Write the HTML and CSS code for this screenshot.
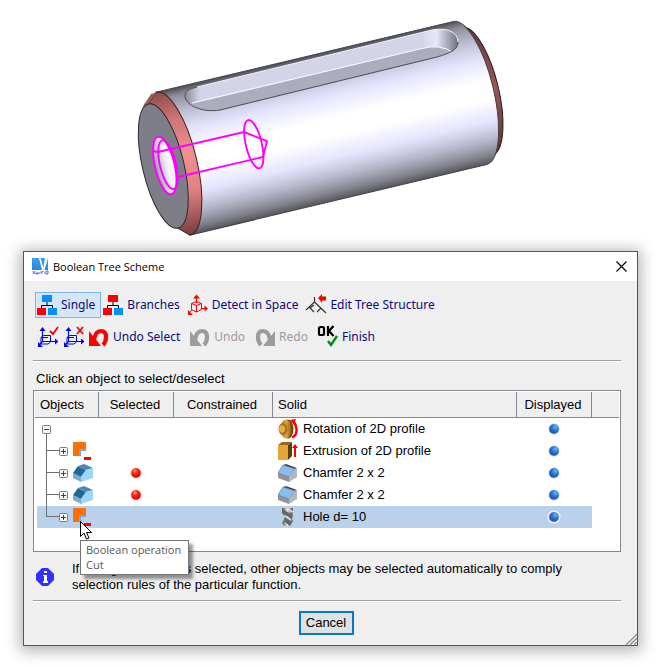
FILE: index.html
```html
<!DOCTYPE html>
<html lang="en">
<head>
<meta charset="utf-8">
<title>Boolean Tree Scheme</title>
<link rel="stylesheet" href="styles.css">
</head>
<body>
<svg class="defs" width="0" height="0" aria-hidden="true">
  <defs>
    <radialGradient id="redBall" cx=".4" cy=".3" r=".7"><stop offset="0" stop-color="#ffb0a0"/><stop offset=".35" stop-color="#ff2a1a"/><stop offset="1" stop-color="#d00000"/></radialGradient>
    <radialGradient id="blueBall" cx=".65" cy=".3" r=".8"><stop offset="0" stop-color="#5cc0ec"/><stop offset=".45" stop-color="#2c72d0"/><stop offset="1" stop-color="#1c44a8"/></radialGradient>
    <linearGradient id="logoBlue" x1="0" x2="0" y1="0" y2="1"><stop offset="0" stop-color="#3f9ff0"/><stop offset="1" stop-color="#2a86dc"/></linearGradient>
    <linearGradient id="gold" x1="0" x2="1"><stop offset="0" stop-color="#a87020"/><stop offset=".5" stop-color="#e8a838"/><stop offset="1" stop-color="#8a5a10"/></linearGradient>
    <linearGradient id="steel" x1="0" x2="1"><stop offset="0" stop-color="#555"/><stop offset=".5" stop-color="#e4e4e4"/><stop offset="1" stop-color="#555"/></linearGradient>
    <symbol id="i-plus" viewBox="0 0 9 9"><rect x=".5" y=".5" width="8" height="8" rx="1" fill="#f6f6f6" stroke="#7c7c7c"/><path d="M2 4.500h5M4.500 2v5" stroke="#2b3f8c"/></symbol>
    <symbol id="i-minus" viewBox="0 0 9 9"><rect x=".5" y=".5" width="8" height="8" rx="1" fill="#f6f6f6" stroke="#7c7c7c"/><path d="M2 4.500h5" stroke="#2b3f8c"/></symbol>
    <symbol id="i-cut" viewBox="0 0 20 20"><path d="M0 1h13v7H6v7H0z" fill="#ff7000"/><path d="M6 15V8h7v2H8v5z" fill="#66aaff"/><path d="M11 16h7v3h-7z" fill="#f00"/></symbol>
    <symbol id="i-body" viewBox="0 0 20 20"><path d="M0 10 8 14 8 19 0 15z" fill="#7aaed0"/><path d="M0 10 5 3 13 7 8 14z" fill="#1f6898"/><path d="M5 3 11 1 20 5 13 7z" fill="#4b88b4"/><path d="M8 14 13 7 20 5v10L8 19z" fill="#9cd6fa"/></symbol>
    <symbol id="i-red" viewBox="0 0 12 12"><circle cx="6" cy="6" r="5" fill="url(#redBall)" stroke="#ff9080" stroke-width=".6"/></symbol>
    <symbol id="i-blue" viewBox="0 0 14 14"><circle cx="7" cy="7" r="6.500" fill="#fff"/><circle cx="7" cy="7" r="5" fill="url(#blueBall)" stroke="#8aa4dc" stroke-width=".6"/></symbol>
    <symbol id="i-rot" viewBox="0 0 20 20"><ellipse cx="10" cy="10" rx="5.500" ry="9.500" fill="#6e480e"/><ellipse cx="8" cy="10" rx="5.500" ry="9.500" fill="url(#gold)"/><ellipse cx="5" cy="10" rx="4.500" ry="6" fill="#a87020"/><ellipse cx="4" cy="10" rx="3" ry="3.800" fill="#e8ac40"/><path d="M14 18.500q5-2 4.500-8.500-.5-5-3-7" fill="none" stroke="#f00" stroke-width="2.400"/><path d="M12 1 18 0 16 5.500z" fill="#f00"/></symbol>
    <symbol id="i-ext" viewBox="0 0 20 20"><path d="M0 4 4 1h10l-4 3z" fill="#96661a"/><path d="M0 4h10v15H0z" fill="#e6a634"/><path d="m10 4 4-3v14l-4 4z" fill="#5e3e0c"/><path d="M17 16V6" stroke="#f00" stroke-width="2"/><path d="m14 7 3-4 3 4z" fill="#f00"/></symbol>
    <symbol id="i-cham" viewBox="0 0 20 20"><path d="M0 10v5l11 4V14z" fill="#909498"/><path d="M5 2 8 1l11 4-2 1z" fill="#45484c"/><path d="m0 10 5-8 12 4-6 8z" fill="#86bef4" stroke="#666" stroke-width=".6"/><path d="m11 14 6-8 2-1v9l-8 5z" fill="#b4b6ba"/></symbol>
    <symbol id="i-drill" viewBox="0 0 20 20"><path d="M4 1h11v5l-2 4 2 4-3 5H6l-2-3 3-6-3-4z" fill="url(#steel)"/><path d="m4 2 11 6-1 4-10-6zM7 10l7 5-2 4-6-5z" fill="#666"/><path d="m8 1 7 4M7 9l6 4" stroke="#ddd" stroke-width="1.500"/></symbol>
    <symbol id="i-axes" viewBox="0 0 20 20"><g fill="none" stroke="#00f"><path d="M4.500 3v11.500H18M4.500 14.500 1 18" stroke-width="1.200"/><path d="M3 17v-6.500l2.500-2h7v6.500l-2.500 2zM3 10.500h7"/></g><path d="m1.500 4 3-4 3 4zM17 11.500l3.500 3-3.500 3zM0 15v5h5z" fill="#00f"/></symbol>
    <symbol id="i-undo" viewBox="0 0 20 20"><path d="M5 14Q6 4 12 4q5 0 5 6 0 5-3 8" fill="none" stroke="currentColor" stroke-width="4.200"/><path d="M0 4v15h12z" fill="currentColor"/></symbol>
  </defs>
</svg>

<svg class="model" viewBox="0 0 660 251" role="img" aria-label="Shaft with keyway and chamfers">
  <defs>
    <linearGradient id="shaft" x1="0" x2="0" y1="0" y2="1">
      <stop offset="0" stop-color="#4c4c54"/><stop offset=".05" stop-color="#8c8c98"/><stop offset=".16" stop-color="#bcbcd0"/><stop offset=".3" stop-color="#e4e4fe"/><stop offset=".45" stop-color="#fff"/><stop offset=".57" stop-color="#fff"/><stop offset=".72" stop-color="#e4e4fe"/><stop offset=".84" stop-color="#b8b8cc"/><stop offset=".94" stop-color="#84848f"/><stop offset="1" stop-color="#55555c"/>
    </linearGradient>
    <linearGradient id="cham" x1="0" x2="0" y1="0" y2="1"><stop offset="0" stop-color="#8c4c4c"/><stop offset=".2" stop-color="#cc7474"/><stop offset=".45" stop-color="#f29090"/><stop offset=".7" stop-color="#e08282"/><stop offset="1" stop-color="#783e3e"/></linearGradient>
    <linearGradient id="chamR" x1="0" x2="0" y1="0" y2="1"><stop offset="0" stop-color="#603434"/><stop offset=".5" stop-color="#985858"/><stop offset="1" stop-color="#5a3030"/></linearGradient>
    <linearGradient id="slotL" x1="0" x2="1"><stop offset="0" stop-color="#85858f"/><stop offset="1" stop-color="#d4d4e8"/></linearGradient>
    <linearGradient id="slotR" x1="0" x2="1"><stop offset="0" stop-color="#d8d8ee"/><stop offset=".35" stop-color="#e6e6fc"/><stop offset="1" stop-color="#666670"/></linearGradient>
    <linearGradient id="bore" x1="0" x2="1"><stop offset="0" stop-color="#9c9ca8"/><stop offset=".6" stop-color="#f0f0fa"/><stop offset="1" stop-color="#fff"/></linearGradient>
    <clipPath id="slotClip"><path d="M197 87 432 30C448 27 458 33 458 42 458 50 450 53 437 57L220 110C202 113 185 105 185 96 185 91 189 89 197 87Z"/></clipPath>
  </defs>
  <g transform="translate(173 163.700) rotate(-13.400)" stroke-width="1">
    <path d="M305-72 316-65A22 66 0 0 1 316 65L305 72Z" fill="url(#chamR)" stroke="#2b1a1a"/>
    <path d="M0-73.400H305A24 73.400 0 0 1 305 73.400H0Z" fill="url(#shaft)" stroke="#44444a"/>
    <path d="M0-73.400A24 73.400 0 0 1 0 73.400L-10 64V-64Z" fill="url(#cham)" stroke="#3a2020"/>
    <path d="M-10-64-17-62-5-73H0Z" fill="#a05c5c"/>
    <ellipse cx="-10" cy="0" rx="20.700" ry="63.800" fill="#7e7e88" stroke="#2a2a2e"/>
  </g>
  <g clip-path="url(#slotClip)">
    <path d="M180 20h285v100H180z" fill="#d4d4e8"/>
    <path d="M184 80h16v32h-16z" fill="url(#slotL)"/>
    <path d="M424 24h36v34h-36z" fill="url(#slotR)"/>
    <path d="M187 105 420 49Q440 43 454 53L440 66 210 118Z" fill="#adabbe"/>
    <path d="M192 103 420 49Q440 43 454 53" fill="none" stroke="#fafaff"/>
  </g>
  <path d="M197 87 432 30C448 27 458 33 458 42" fill="none" stroke="#f0f0fa"/>
  <path d="M458 42C458 50 450 53 437 57L220 110C202 113 185 105 185 96 185 91 189 89 197 87" fill="none" stroke="#4c4c54"/>
  <g fill="none" stroke="#f0f" stroke-width="1.900">
    <ellipse cx="164.700" cy="165.500" rx="9.800" ry="29.500" transform="rotate(-13.400 164.700 165.500)" fill="url(#bore)"/>
    <ellipse cx="168" cy="164.700" rx="8" ry="25" transform="rotate(-13.400 168 164.700)"/>
    <ellipse cx="253.800" cy="144.200" rx="8" ry="24.800" transform="rotate(-13.400 253.800 144.200)"/>
    <path d="M152 151 158 152 244 132 267 141 263 157 178 177"/>
  </g>
</svg>

<main class="dialog">
  <header class="titlebar">
    <svg class="logo" viewBox="0 0 17 17" aria-hidden="true"><path d="M0 0h16v12H0z" fill="url(#logoBlue)"/><path d="m7 0 3 12h2L8.500 0zM13 0l-2 12h1.500L16 0z" fill="#fff"/><path d="M1 13v1l1 2 1-2v-1M4 15h2v1H4zM7 14v2M9 13v3M10 15q0-2 2-2M12 15h1M14 13h2v3h-2z" fill="none" stroke="#3344dd" stroke-width=".8"/></svg>
    <h1>Boolean Tree Scheme</h1>
    <button class="close" aria-label="Close"><svg viewBox="0 0 11 11"><path d="m.5.500 10 10m0-10-10 10" stroke="#000" stroke-width="1.200"/></svg></button>
  </header>

  <div class="content">
    <div class="toolbars">
      <div class="toolbar">
        <button class="tool active" aria-pressed="true"><svg viewBox="0 0 20 20"><path d="M10 7v4M4.500 13v-2.500h11V13" fill="none" stroke="#000"/><path d="M5 0h10v7H5zM11 13h9v7h-9z" fill="#0090ff"/><path d="M0 13h9v7H0z" fill="#f00"/></svg>Single</button>
        <button class="tool"><svg viewBox="0 0 20 20"><path d="M10 7v4M4.500 13v-2.500h11V13" fill="none" stroke="#000"/><path d="M5 0h10v7H5zM0 13h9v7H0z" fill="#f00"/><path d="M11 13h9v7h-9z" fill="#0090ff"/></svg>Branches</button>
        <button class="tool"><svg viewBox="0 0 20 20"><g fill="none" stroke="#f00"><path d="M8.500 2v6M14 13.500h4M4 15l-3 3"/><path d="m3.500 8.500 5-2 5 2v6l-5 2.500-5-2.500zM3.500 8.500l5 2 5-2M8.500 10.500V17"/></g><path d="m5 3.500 3.500-4 3.500 4zM16.500 10.500l3.500 3-3.500 3zM0 15v5h5z" fill="#f00"/></svg>Detect in Space</button>
        <button class="tool"><svg viewBox="0 0 20 20"><path d="M8.500 2v5L0 15M8.500 7 20 18M8 10 4 13l4 4M15 13l-4 4" fill="none" stroke="#333" stroke-width="1.200"/><path d="m12 3 4-4v2.500h4v4h-4V8z" fill="#f00"/></svg>Edit Tree Structure</button>
      </div>
      <div class="toolbar history">
        <button class="tool icon" aria-label="Select all"><svg viewBox="0 0 20 20"><use href="#i-axes"/><path d="m12 4 3 3 5-7" fill="none" stroke="#f00" stroke-width="1.800"/></svg></button>
        <button class="tool icon" aria-label="Deselect all"><svg viewBox="0 0 20 20"><use href="#i-axes"/><path d="m13 0 6 7m0-7-6 7" fill="none" stroke="#f00" stroke-width="1.800"/></svg></button>
        <button class="tool undo"><svg viewBox="0 0 20 20"><use href="#i-undo"/></svg>Undo Select</button>
        <button class="tool" disabled><svg viewBox="0 0 20 20"><use href="#i-undo"/></svg>Undo</button>
        <button class="tool" disabled><svg viewBox="0 0 20 20"><use href="#i-undo" transform="matrix(-1 0 0 1 20 0)"/></svg>Redo</button>
        <button class="tool"><svg viewBox="0 0 20 20"><g fill="none" stroke="#000" stroke-width="2.200"><rect x="1" y="0" width="5" height="8" rx="1.500"/><path d="M10-1V9M15.500-1 11 4l4.500 5"/></g><path d="m10 14 3 4 6-9" fill="none" stroke="#008a18" stroke-width="2.400"/></svg>Finish</button>
      </div>
    </div>

    <p class="prompt">Click an object to select/deselect</p>

    <div class="tree">
      <table>
        <colgroup><col class="c-obj"><col class="c-sel"><col class="c-con"><col><col class="c-dis"><col class="c-end"></colgroup>
        <thead><tr><th>Objects</th><th class="mid">Selected</th><th class="mid">Constrained</th><th>Solid</th><th class="mid">Displayed</th><th></th></tr></thead>
        <tbody>
          <tr><td class="branch root"><div class="node"><svg class="box" role="img" aria-label="Collapse"><use href="#i-minus"/></svg></div></td><td></td><td></td><td><div class="solid"><svg><use href="#i-rot"/></svg>Rotation of 2D profile</div></td><td class="mid"><svg class="dot"><use href="#i-blue"/></svg></td><td></td></tr>
          <tr><td class="branch"><div class="node"><svg class="box" role="img" aria-label="Expand"><use href="#i-plus"/></svg><svg class="op"><use href="#i-cut"/></svg></div></td><td></td><td></td><td><div class="solid"><svg><use href="#i-ext"/></svg>Extrusion of 2D profile</div></td><td class="mid"><svg class="dot"><use href="#i-blue"/></svg></td><td></td></tr>
          <tr><td class="branch"><div class="node"><svg class="box" role="img" aria-label="Expand"><use href="#i-plus"/></svg><svg class="op"><use href="#i-body"/></svg></div></td><td class="mid"><svg class="dot small"><use href="#i-red"/></svg></td><td></td><td><div class="solid"><svg><use href="#i-cham"/></svg>Chamfer 2 x 2</div></td><td class="mid"><svg class="dot"><use href="#i-blue"/></svg></td><td></td></tr>
          <tr><td class="branch"><div class="node"><svg class="box" role="img" aria-label="Expand"><use href="#i-plus"/></svg><svg class="op"><use href="#i-body"/></svg></div></td><td class="mid"><svg class="dot small"><use href="#i-red"/></svg></td><td></td><td><div class="solid"><svg><use href="#i-cham"/></svg>Chamfer 2 x 2</div></td><td class="mid"><svg class="dot"><use href="#i-blue"/></svg></td><td></td></tr>
          <tr class="picked"><td class="branch last"><div class="node"><svg class="box" role="img" aria-label="Expand"><use href="#i-plus"/></svg><svg class="op"><use href="#i-cut"/></svg></div>
            <div class="hover"><svg class="cursor" viewBox="0 0 12 19"><path d="M.5.500v15l3.500-3.500 2.500 6 2.500-1-2.500-5.500h5z" fill="#fff" stroke="#000"/></svg><div class="tooltip" role="tooltip">Boolean operation<br>Cut</div></div></td><td></td><td></td><td><div class="solid"><svg><use href="#i-drill"/></svg>Hole d= 10</div></td><td class="mid"><svg class="dot"><use href="#i-blue"/></svg></td><td></td></tr>
        </tbody>
      </table>
    </div>

    <div class="info">
      <svg viewBox="0 0 18 18" aria-hidden="true"><path d="M6 0h6l6 6v6l-6 6H6l-6-6V6z" fill="#3030ff"/><path d="M8 3h3v2H8zM7 7h4v6h1v2H7v-2h1V8H7z" fill="#fff"/></svg>
      <p>If a single chamfer is selected, other objects may be selected automatically to comply selection rules of the particular function.</p>
    </div>

    <footer><button class="cancel">Cancel</button></footer>
  </div>
  <svg class="grip" viewBox="0 0 12 12" aria-hidden="true"><path d="M1 12 12 1M5 12l7-7M9 12l3-3" stroke="#909090" stroke-width="1.400"/></svg>
</main>
</body>
</html>
```
FILE: styles.css
```css
* { box-sizing: border-box; }
body { margin: 0; background: #fff; color: #000; font: 13px/16px "Liberation Sans", Arial, sans-serif; }
svg { display: block; flex: none; overflow: visible; }
.defs { position: absolute; }
h1, p { margin: 0; font-size: inherit; font-weight: normal; }
button { margin: 0; border: 0; background: none; font: inherit; color: inherit; }

.model { width: 100%; height: auto; }

.dialog { position: relative; margin: 0 22px 22px 23px; border: 1px solid #555; background: #efefef; box-shadow: 0 2px 14px 3px rgba(0, 0, 0, .3); }
.titlebar { display: flex; align-items: center; gap: 4px; height: 29px; padding: 0 10px 0 8px; background: #fff; font: 11px/16px "Open Sans", "Noto Sans", sans-serif; }
.logo { width: 17px; height: 17px; }
.close { margin-left: auto; padding: 0; }
.close svg { width: 11px; height: 11px; }

.content { padding: 11px 16px 10px 9px; }
.toolbars { padding: 0 2px 10px; border-bottom: 1px solid #a0a0a0; box-shadow: 0 1px #fff; }
.toolbar { display: flex; font: 12px/18px "Noto Sans", sans-serif; color: #0a0a78; }
.toolbar + .toolbar { margin-top: 6px; }
.tool { display: flex; align-items: center; gap: 4px; height: 26px; padding: 0 5px 0 1px; border: 1px solid transparent; white-space: nowrap; }
.tool svg { width: 20px; height: 20px; }
.history .tool { padding-right: 7px; }
.history .icon { padding: 0 2px; }
.tool.active { border-color: #7eb4ea; background: #d5e6f7; }
.tool.undo svg { color: #f00; }
.tool:disabled { color: #9c9c9c; }

.prompt { padding: 10px 3px 3px; }

.tree { height: 162px; padding: 1px; border: 1px solid #828790; background: #fff; }
table { width: 100%; border-collapse: separate; border-spacing: 0; table-layout: fixed; }
.c-obj { width: 64px; }
.c-sel, .c-dis { width: 75px; }
.c-con { width: 99px; }
.c-end { width: 27px; }
th { height: 26px; padding: 0 5px; border-right: 1px solid #828790; border-bottom: 1px solid #828790; background: #efefef; text-align: left; font-weight: normal; }
th:last-child { border-right: 0; }
td { height: 22px; padding: 0 5px; }
td.mid, th.mid { padding: 0 2px 0 0; text-align: center; }
.dot { width: 14px; height: 14px; margin: 0 auto; }
.dot.small { width: 12px; height: 12px; }
.solid { display: flex; align-items: center; gap: 5px; }
.solid svg { width: 20px; height: 20px; }

.branch { position: relative; padding: 0 0 0 6px; }
.node { display: flex; align-items: center; gap: 5px; height: 22px; padding-left: 18px; }
.root .node { padding-left: 1px; }
.box { position: relative; width: 9px; height: 9px; }
.op { width: 20px; height: 20px; }
.branch::before { content: ""; position: absolute; left: 11px; top: 0; width: 1px; height: 100%; background: #6e6e6e; }
.branch::after { content: ""; position: absolute; left: 11px; top: 10px; width: 13px; height: 1px; background: #6e6e6e; }
.root::before { top: 15px; height: 7px; }
.root::after { display: none; }
.last::before { height: 10px; }
.picked td { background: #b9d1ea; }
.picked td:first-child { background: linear-gradient(to right, #fff 2px, #b9d1ea 2px); }
.picked td:last-child { background: none; }

.hover { position: absolute; z-index: 1; left: 45px; top: 15px; }
.cursor { width: 12px; height: 19px; }
.tooltip { padding: 1px 7px 2px 5px; border: 1px solid #767676; background: #fff; box-shadow: 4px 4px 3px rgba(0, 0, 0, .4); color: #575757; font: 11px/15px "Open Sans", "Noto Sans", sans-serif; white-space: nowrap; }

.info { display: flex; align-items: center; gap: 18px; padding: 9px 24px 7px 3px; }
.info svg { width: 18px; height: 18px; }
footer { display: flex; justify-content: center; padding: 10px 2px 0 0; border-top: 1px solid #a0a0a0; box-shadow: inset 0 1px #fff; }
.cancel { width: 55px; height: 24px; padding: 0; border: 2px solid #0078d7; background: #e1e1e1; }
.grip { position: absolute; right: 0; bottom: 0; width: 12px; height: 12px; }
```
